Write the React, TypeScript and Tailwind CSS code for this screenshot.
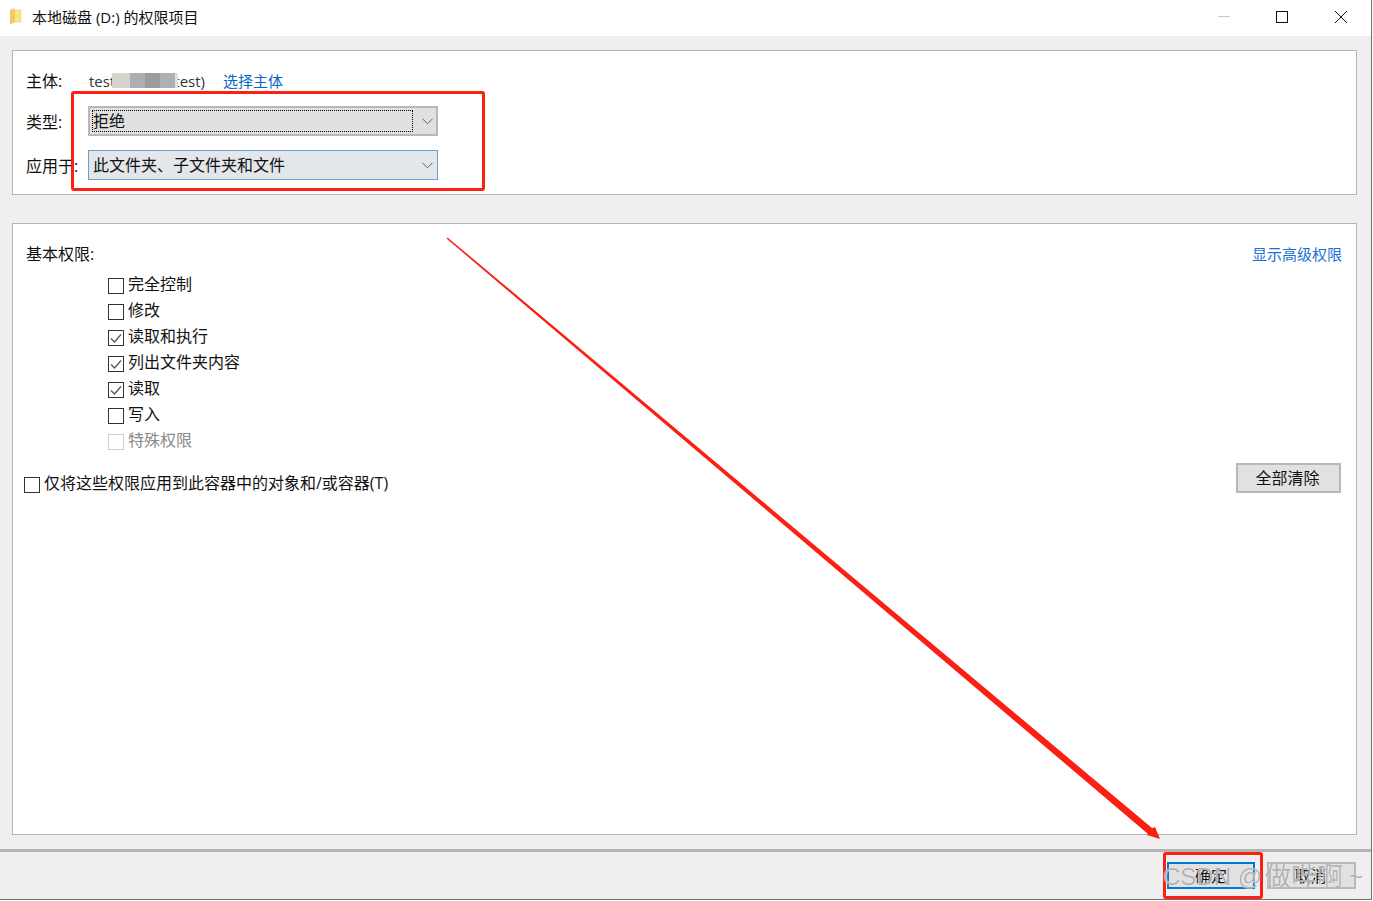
import React from 'react';

const Chevron: React.FC = () => (
  <svg className="w-[11px] h-[7px] text-[#606060]" viewBox="0 0 11 7" fill="none" stroke="currentColor" strokeWidth="1">
    <path d="M0.5 0.8L5.5 5.8L10.5 0.8" />
  </svg>
);

const Check: React.FC<{ label: string; checked?: boolean; disabled?: boolean; className?: string }> = ({ label, checked, disabled, className }) => (
  <div className={`flex items-center h-[26px] ${className ?? ''}`}>
    <span className={`w-4 h-4 mr-1 bg-white border flex items-center justify-center shrink-0 ${disabled ? 'border-[#cfcfcf]' : 'border-[#333333]'}`}>
      {checked && (
        <svg className="w-3 h-3 text-[#555555]" viewBox="0 0 12 12" fill="none" stroke="currentColor" strokeWidth="1.3">
          <path d="M1 6.5L4.5 10L11 2.5" />
        </svg>
      )}
    </span>
    <span className={`relative -top-[2px] ${disabled ? 'text-[#8a8a8a]' : 'text-[#111111]'}`}>{label}</span>
  </div>
);

const App: React.FC = () => {
  return (
    <div className="relative w-[1373px] h-[901px] overflow-hidden bg-white text-[16px] leading-none text-[#111111] font-['Open_Sans','Noto_Sans_CJK_SC',sans-serif]">
      <div className="w-[1372px] h-[900px] flex flex-col bg-[#efefef] border-r border-b border-[#707070]">
        {/* title bar */}
        <div className="h-9 shrink-0 bg-white flex items-center pl-[10px]">
          <svg className="w-3 h-[17px] mr-[10px] -mt-[4px]" viewBox="0 0 12 17">
            <path d="M0 1.5L4 0V14L0 16.5Z" fill="#f5d98a" />
            <path d="M2.5 1.5H11.5V14.5H2.5Z" fill="#fbe08f" />
            <path d="M0 2V16.5L5 14V1.5Z" fill="#f3c95f" />
          </svg>
          <span className="text-[15px] -mt-[2px]">本地磁盘 (D:) 的权限项目</span>
          <div className="ml-auto flex items-center h-full -mt-[3px]">
            <span className="w-3 h-px bg-[#c8c8c8]" />
            <span className="ml-[46px] w-3 h-3 border-[1.5px] border-[#111111]" />
            <svg className="ml-[47px] mr-[24px] w-3 h-3 text-[#111111]" viewBox="0 0 12 12" fill="none" stroke="currentColor" strokeWidth="1">
              <path d="M0 0L12 12M12 0L0 12" />
            </svg>
          </div>
        </div>

        {/* content */}
        <div className="flex-1 flex flex-col px-3 pt-[14px]">
          <div className="h-[145px] shrink-0 w-[1345px] bg-white border border-[#b4b4b4] px-[13px] pt-[19px]">
            <div className="flex items-center h-[22px]">
              <span className="w-[62px]">主体:</span>
              <div className="relative flex justify-between w-[116px] ml-px">
                <span className="text-[#333333] text-[15px]">test</span>
                <span className="text-[#333333] text-[15px]">test)</span>
                <div className="absolute left-[23px] -top-[1px] flex h-[15px] w-[68px]">
                  <span className="w-[18px] bg-[#d6d3ce]" />
                  <span className="w-[15px] bg-[#abafb2]" />
                  <span className="w-[15px] bg-[#9c9c9c]" />
                  <span className="w-[15px] bg-[#aeb1b4]" />
                  <span className="w-[3px] bg-[#e0e0e0]" />
                </div>
              </div>
              <span className="ml-[18px] text-[15px] text-[#0a66c8]">选择主体</span>
            </div>
            <div className="flex items-center mt-[14px]">
              <span className="w-[62px] relative top-[1px]">类型:</span>
              <div className="w-[350px] h-[30px] bg-[#e0e0e0] border-2 border-[#b8b8b8] flex items-center pl-[2px]">
                <span className="w-[321px] h-[22px] border border-dotted border-black flex items-center">拒绝</span>
                <span className="ml-[9px]"><Chevron /></span>
              </div>
            </div>
            <div className="flex items-center mt-[14px]">
              <span className="w-[62px] relative top-[1px]">应用于:</span>
              <div className="w-[350px] h-[30px] bg-[#e2e7ec] border border-[#6f9fc8] flex items-center pl-[4px]">
                <span className="w-[329px]">此文件夹、子文件夹和文件</span>
                <Chevron />
              </div>
            </div>
          </div>

          <div className="mt-[28px] h-[612px] shrink-0 w-[1345px] bg-white border border-[#b4b4b4] px-[13px] pt-[21px]">
            <div className="flex items-center justify-between h-[18px] pr-px">
              <span>基本权限:</span>
              <span className="text-[15px] text-[#1a6fd0]">显示高级权限</span>
            </div>
            <div className="pl-[82px] mt-[10px]">
              <Check label="完全控制" />
              <Check label="修改" />
              <Check label="读取和执行" checked />
              <Check label="列出文件夹内容" checked />
              <Check label="读取" checked />
              <Check label="写入" />
              <Check label="特殊权限" disabled />
            </div>
            <div className="flex items-start justify-between mt-[8px] pr-[2px]">
              <Check label="仅将这些权限应用到此容器中的对象和/或容器(T)" className="-ml-[2px] mt-[9px]" />
              <button className="w-[105px] h-[30px] pb-[1px] pr-[2px] bg-[#e1e1e1] border-2 border-[#b8b8b8] text-[#111111]">全部清除</button>
            </div>
          </div>
        </div>

        {/* footer */}
        <div className="h-[50px] shrink-0 border-t-[3px] border-[#b4b4b4] flex justify-end items-start pt-[10px] pr-[15px] gap-3">
          <button className="w-[88px] h-[27px] bg-[#e1e1e1] border-2 border-[#0078d7] text-[#111111]">确定</button>
          <button className="w-[89px] h-[27px] pr-[2px] bg-[#e1e1e1] border-2 border-[#b8b8b8] text-[#111111]">取消</button>
        </div>
      </div>

      {/* screenshot annotations */}
      <div className="absolute left-[71px] top-[91px] w-[414px] h-[100px] border-[3px] border-[#fb1f14] rounded-[3px] pointer-events-none" />
      <div className="absolute left-[1163px] top-[852px] w-[100px] h-[47px] border-[3px] border-[#fb1f14] rounded-[3px] pointer-events-none" />
      <svg className="absolute left-0 top-0 pointer-events-none" width="1373" height="901" viewBox="0 0 1373 901">
        <path d="M447.5 237.4L1152.3 828.3L1155 827L1160 839L1147 835L1147.7 833.7L446.5 238.6Z" fill="#fb1f14" />
      </svg>
      <div className="absolute left-[1163px] top-[864px] flex items-center h-[26px] text-[24px] whitespace-nowrap text-[#9a9a9a]/75 [text-shadow:0_0_1px_#ffffff] font-['Liberation_Sans','Noto_Sans_CJK_SC',sans-serif] pointer-events-none">
        <span>CSDN @</span>
        <span className="ml-[3px] text-[26px]">做哔啊</span>
        <span className="ml-[6px]">~</span>
      </div>
    </div>
  );
};

export default App;
